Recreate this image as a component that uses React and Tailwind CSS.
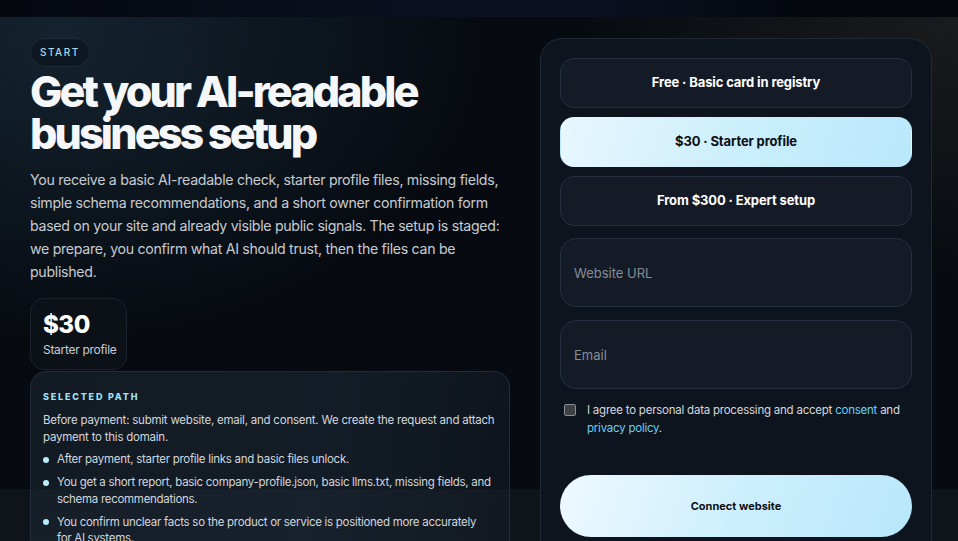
import { useState } from 'react';

const TIERS = [
  { id: 'free', label: 'Free · Basic card in registry' },
  { id: 'starter', label: '$30 · Starter profile' },
  { id: 'expert', label: 'From $300 · Expert setup' },
];

const STEPS = [
  'After payment, starter profile links and basic files unlock.',
  'You get a short report, basic company-profile.json, basic llms.txt, missing fields, and schema recommendations.',
  'You confirm unclear facts so the product or service is positioned more accurately for AI systems.',
];

export default function App() {
  const [tier, setTier] = useState('starter');
  const [agree, setAgree] = useState(false);

  return (
    <div className="h-screen overflow-hidden bg-[#070b11] font-['Inter','Noto_Sans',sans-serif] text-white">
      {/* Top strip */}
      <div className="h-[17px] bg-[linear-gradient(90deg,#05080f_0%,#0a1020_45%,#0b1122_60%,#04070d_85%)]" />

      <div className="h-[524px] bg-[linear-gradient(180deg,transparent_472px,rgba(120,140,160,0.07)_472px),radial-gradient(ellipse_420px_300px_at_60px_20px,#14232f_0%,transparent_100%),radial-gradient(ellipse_380px_260px_at_100%_0%,#1a1b1d_0%,transparent_100%)]">
        <div className="flex gap-[30px] pl-[30px] pt-[21px]">
          {/* Left column */}
          <div className="w-[480px] shrink-0">
            <span className="inline-flex h-[29px] items-center rounded-full border border-[#1d2a38] bg-[#0d1823] px-[9px] text-[10px] font-medium tracking-[0.15em] text-[#a9d9ef]">
              START
            </span>
            <h1 className="mt-[3px] text-[43px] font-extrabold leading-[42px] tracking-[-0.066em] text-[#f4f6f8]">
              Get your AI-readable
              <br />
              business setup
            </h1>
            <p className="mt-[14px] w-[480px] text-[14.2px] leading-[23px] tracking-[-0.022em] text-[#c6cbd2]">
              You receive a basic AI-readable check, starter profile files, missing fields, simple schema recommendations, and a short owner confirmation form based on your site and already visible public signals. The setup is staged: we prepare, you confirm what AI should trust, then the files can be published.
            </p>

            <div className="mt-[15px] inline-block rounded-[14px] border border-[#1b222c] bg-[#0c1118] pb-[11px] pl-[12px] pr-[10px] pt-[11px]">
              <div className="text-[24px] font-extrabold leading-[30px] tracking-[-0.02em] text-white">$30</div>
              <div className="mt-[2px] text-[12px] leading-[16px] tracking-[-0.025em] text-[#c9cdd3]">Starter profile</div>
            </div>

            <div className="mt-px rounded-[16px] border border-[#222c38] bg-[linear-gradient(100deg,rgba(28,38,50,0.55),rgba(34,50,64,0.45)_60%,rgba(20,28,38,0.5))] px-[12px] pb-[14px] pt-[19px]">
              <div className="text-[9px] font-extrabold leading-[12px] tracking-[0.2em] text-[#9fe2f7]">SELECTED PATH</div>
              <p className="mt-[9px] text-[11.5px] leading-[16.5px] tracking-[-0.02em] text-[#d2d7dd]">
                Before payment: submit website, email, and consent. We create the request and attach payment to this domain.
              </p>
              <ul className="mt-[6px] flex flex-col gap-[6.5px] pr-[4px]">
                {STEPS.map(s => (
                  <li key={s} className="flex gap-[8px] text-[11.5px] leading-[16.5px] tracking-[-0.025em] text-[#d2d7dd]">
                    <span className="mt-[5.5px] h-[6px] w-[6px] shrink-0 rounded-full bg-[#b7ecfb]" />
                    <span>{s}</span>
                  </li>
                ))}
              </ul>
            </div>
          </div>

          {/* Right card */}
          <div className="w-[392px] shrink-0 rounded-[22px] border border-[#1f2a37] bg-[#0d141e] p-[19px] pb-[30px]">
            <div className="flex flex-col gap-[9px]">
              {TIERS.map(t => (
                <button
                  key={t.id}
                  onClick={() => setTier(t.id)}
                  className={`h-[50px] rounded-[14px] border text-[13px] font-bold tracking-[-0.01em] ${
                    tier === t.id
                      ? 'border-transparent bg-[linear-gradient(110deg,#e8f7fe,#c9eefc_55%,#b9e8fb)] text-[#0b0f15]'
                      : 'border-[#252f3d] bg-[#141b27] text-white'
                  }`}
                >
                  {t.label}
                </button>
              ))}
            </div>

            <div className="mt-[12px] flex flex-col gap-[13px]">
              <input
                placeholder="Website URL"
                className="h-[69px] rounded-[16px] border border-[#252f3d] bg-[#141b27] px-[13px] text-[13px] text-white outline-none placeholder:text-[#878d96]"
              />
              <input
                placeholder="Email"
                className="h-[69px] rounded-[16px] border border-[#252f3d] bg-[#141b27] px-[13px] text-[13px] text-white outline-none placeholder:text-[#878d96]"
              />
            </div>

            <label className="mt-[12px] flex gap-[11px] pl-[4px] text-[11.5px] leading-[18px] tracking-[-0.02em] text-[#d4d8de]">
              <input
                type="checkbox"
                checked={agree}
                onChange={e => setAgree(e.target.checked)}
                className="mt-[3px] h-[12px] w-[12px] shrink-0 appearance-none rounded-[2px] border border-[#8c8f94] bg-[#3d4045]"
              />
              <span>
                I agree to personal data processing and accept <span className="text-[#67d1f5]">consent</span> and{' '}
                <span className="text-[#67d1f5]">privacy policy</span>.
              </span>
            </label>

            <button className="mt-[38px] h-[62px] w-full rounded-full bg-[linear-gradient(110deg,#eef9ff,#cdeffd_50%,#b8e7fb)] text-[11px] font-bold text-[#0b0f15]">
              Connect website
            </button>
          </div>
        </div>
      </div>
    </div>
  );
}
